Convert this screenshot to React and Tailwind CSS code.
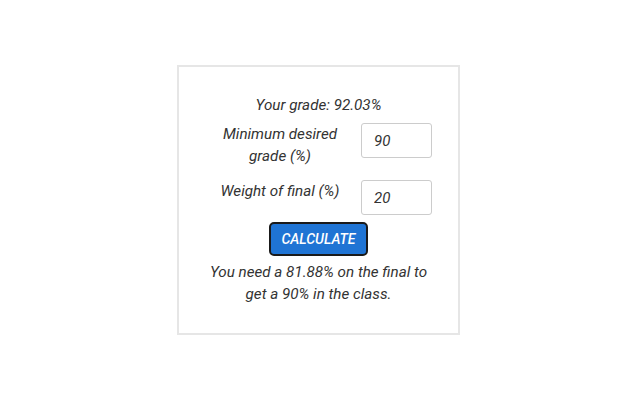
import { useState } from 'react'

const FONT = { fontFamily: 'Roboto, "Liberation Sans", sans-serif' }

const GradeRow = ({ label, value, onChange }) => (
  <div className="flex items-start">
    <label className="w-[140px] text-center leading-[22px]">{label}</label>
    <input
      className="ml-[11px] w-[71px] h-[35px] rounded-[3px] border border-[#cccccc] px-3 italic text-[15px] text-[#333] outline-none"
      value={value}
      onChange={(e) => onChange(e.target.value)}
    />
  </div>
)

const App = () => {
  const [desired, setDesired] = useState('90')
  const [weight, setWeight] = useState('20')
  const current = 92.03

  //grade needed on the final to land on the desired grade
  const needed = ((parseFloat(desired) - current * (1 - parseFloat(weight) / 100)) / (parseFloat(weight) / 100)).toFixed(2)

  return (
    <div className="min-h-screen bg-white pt-[65px]" style={FONT}>
      <div className="ml-[177px] w-[283px] border-2 border-[#e6e6e6] pt-[27px] pb-[28px] italic text-[15.2px] text-[#333]">
        <p className="text-center leading-[22px]">Your grade: {current}%</p>

        <div className="mt-[7px] ml-[31px] flex flex-col gap-[13px]">
          <GradeRow label={<>Minimum desired<br />grade (%)</>} value={desired} onChange={setDesired} />
          <GradeRow label="Weight of final (%)" value={weight} onChange={setWeight} />
        </div>

        <div className="mt-[7px] flex justify-center">
          <button className="w-[99px] h-[34px] rounded-[5px] border-2 border-[#1a1a1a] bg-[#1f74d4] text-white text-[14px] font-medium italic uppercase">
            Calculate
          </button>
        </div>

        <p className="mt-[5px] text-center leading-[22px]">
          You need a {needed}% on the final to<br />get a {desired}% in the class.
        </p>
      </div>
    </div>
  )
}

export default App
